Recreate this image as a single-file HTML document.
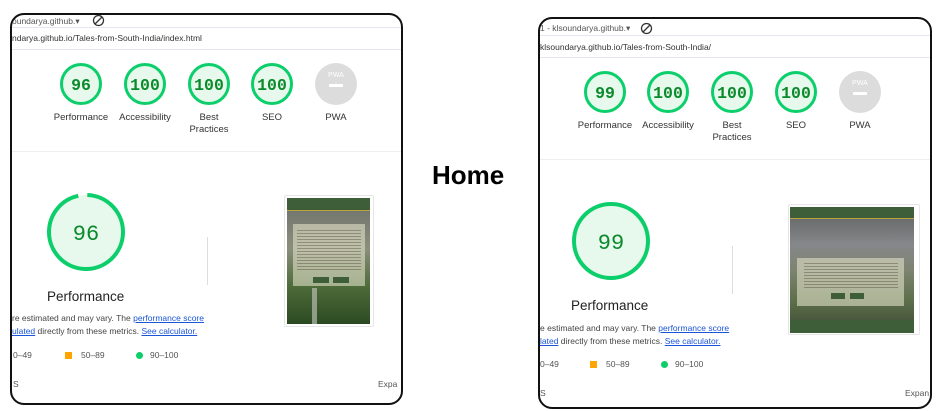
<!DOCTYPE html>
<html><head><meta charset="utf-8"><style>
*{margin:0;padding:0;box-sizing:border-box}
body{width:936px;height:411px;background:#fff;font-family:"Liberation Sans",Arial,sans-serif;position:relative;overflow:hidden;color:#212121}
.panel{position:absolute;border:2px solid #111;border-radius:14px;overflow:hidden;background:#fff}
.a{position:absolute;white-space:nowrap}
.hl{position:absolute;left:0;right:0;height:1px;background:#e4e8ee}
.lbl{position:absolute;font-size:9.5px;color:#333;text-align:center;width:70px;line-height:12px}
.g{position:absolute}
a{color:#1a55d8;text-decoration:underline}
.t{font-size:8.5px;color:#444}
</style></head><body>

<!-- LEFT PANEL -->
<div class="panel" style="left:10px;top:13px;width:393px;height:392px">
 <div class="a t" style="left:0;top:1px;color:#555">oundarya.github.▾</div>
 <svg class="a" style="left:80px;top:-1px" width="13" height="13" viewBox="0 0 13 13"><circle cx="6.5" cy="6.5" r="5" fill="none" stroke="#333" stroke-width="1.3"/><line x1="3" y1="10" x2="10" y2="3" stroke="#333" stroke-width="1.3"/></svg>
 <div class="hl" style="top:12px"></div>
 <div class="a t" style="left:0;top:18px;color:#333">ndarya.github.io/Tales-from-South-India/index.html</div>
 <div class="hl" style="top:34px"></div>

 <svg class="g" style="left:0;top:0" width="393" height="150">
  <g font-family="Liberation Mono,monospace" font-size="16.5" font-weight="bold" fill="#0a8a2a" text-anchor="middle">
   <circle cx="69" cy="69" r="19.5" fill="#e7f8ec" stroke="#0cce6b" stroke-width="3"/><text x="69" y="75">96</text>
   <circle cx="133" cy="69" r="19.5" fill="#e7f8ec" stroke="#0cce6b" stroke-width="3"/><text x="133" y="75">100</text>
   <circle cx="197" cy="69" r="19.5" fill="#e7f8ec" stroke="#0cce6b" stroke-width="3"/><text x="197" y="75">100</text>
   <circle cx="260" cy="69" r="19.5" fill="#e7f8ec" stroke="#0cce6b" stroke-width="3"/><text x="260" y="75">100</text>
  </g>
  <circle cx="324" cy="69" r="21" fill="#dcdcdc"/>
  <text x="324" y="62" font-size="7" fill="#fff" text-anchor="middle" font-family="Liberation Sans">PWA</text>
  <rect x="317" y="69" width="14" height="3" fill="#fff"/>
 </svg>
 <div class="lbl" style="left:34px;top:97px">Performance</div>
 <div class="lbl" style="left:98px;top:97px">Accessibility</div>
 <div class="lbl" style="left:162px;top:97px">Best<br>Practices</div>
 <div class="lbl" style="left:225px;top:97px">SEO</div>
 <div class="lbl" style="left:289px;top:97px">PWA</div>
 <div class="hl" style="top:136px;background:#eee"></div>

 <svg class="g" style="left:34px;top:177px" width="80" height="80">
  <circle cx="40" cy="40" r="37" fill="#e7f8ec" stroke="#0cce6b" stroke-width="4" stroke-dasharray="223 232" transform="rotate(-88 40 40)"/>
  <text x="40" y="48" font-size="22" fill="#0a8a2a" text-anchor="middle" font-family="Liberation Mono,monospace">96</text>
 </svg>
 <div class="a" style="left:35px;top:274px;font-size:13.5px;color:#222">Performance</div>
 <div class="a t" style="left:0;top:298px">re estimated and may vary. The <a>performance score</a></div>
 <div class="a t" style="left:0;top:311px"><a>ulated</a> directly from these metrics. <a>See calculator.</a></div>
 <div class="a t" style="left:1px;top:335px;color:#555">0–49</div>
 <div class="a" style="left:53px;top:337px;width:7px;height:7px;background:#ffa400"></div>
 <div class="a t" style="left:69px;top:335px;color:#555">50–89</div>
 <div class="a" style="left:124px;top:337px;width:7px;height:7px;border-radius:50%;background:#0cce6b"></div>
 <div class="a t" style="left:138px;top:335px;color:#555">90–100</div>
 <div class="a" style="left:195px;top:222px;width:1px;height:48px;background:#ddd"></div>
 <div class="a t" style="left:1px;top:364px;color:#555">S</div>
 <div class="a t" style="left:366px;top:364px;color:#555">Expa</div>

 <div class="a" style="left:272px;top:180px;width:90px;height:132px;border:1px solid #e6e6e6;border-radius:2px;background:#fff"></div>
 <div class="a" style="left:275px;top:183px;width:83px;height:126px;background:linear-gradient(#6d6f6a,#8a8f7c 40%,#4e6b3a 70%,#2c4a22);overflow:hidden">
  <div style="height:13px;background:#3e5e3a;border-bottom:1px solid #b9a33a"></div>
  <div style="position:absolute;left:6px;top:26px;width:72px;height:62px;background:rgba(225,225,200,0.6)"></div>
  <div style="position:absolute;left:10px;top:32px;width:64px;height:40px;background:repeating-linear-gradient(rgba(60,50,30,.35) 0 1px,transparent 1px 3px)"></div>
  <div style="position:absolute;left:26px;top:79px;width:16px;height:6px;background:#3e5e3a"></div>
  <div style="position:absolute;left:46px;top:79px;width:16px;height:6px;background:#3e5e3a"></div>
  <div style="position:absolute;left:25px;top:90px;width:5px;height:36px;background:#c9cdc8;opacity:.6"></div>
 </div>
</div>

<div class="a" style="left:432px;top:160px;font-size:26px;font-weight:bold;color:#000">Home</div>

<!-- RIGHT PANEL -->
<div class="panel" style="left:538px;top:17px;width:394px;height:392px">
 <div class="a t" style="left:0;top:4px;color:#555">1 - klsoundarya.github.▾</div>
 <svg class="a" style="left:100px;top:3px" width="13" height="13" viewBox="0 0 13 13"><circle cx="6.5" cy="6.5" r="5" fill="none" stroke="#333" stroke-width="1.3"/><line x1="3" y1="10" x2="10" y2="3" stroke="#333" stroke-width="1.3"/></svg>
 <div class="hl" style="top:16px"></div>
 <div class="a t" style="left:0;top:23px;color:#333">klsoundarya.github.io/Tales-from-South-India/</div>
 <div class="hl" style="top:38px"></div>

 <svg class="g" style="left:0;top:0" width="394" height="150">
  <g font-family="Liberation Mono,monospace" font-size="16.5" font-weight="bold" fill="#0a8a2a" text-anchor="middle">
   <circle cx="65" cy="73" r="19.5" fill="#e7f8ec" stroke="#0cce6b" stroke-width="3"/><text x="65" y="79">99</text>
   <circle cx="128" cy="73" r="19.5" fill="#e7f8ec" stroke="#0cce6b" stroke-width="3"/><text x="128" y="79">100</text>
   <circle cx="192" cy="73" r="19.5" fill="#e7f8ec" stroke="#0cce6b" stroke-width="3"/><text x="192" y="79">100</text>
   <circle cx="256" cy="73" r="19.5" fill="#e7f8ec" stroke="#0cce6b" stroke-width="3"/><text x="256" y="79">100</text>
  </g>
  <circle cx="320" cy="73" r="21" fill="#dcdcdc"/>
  <text x="320" y="66" font-size="7" fill="#fff" text-anchor="middle" font-family="Liberation Sans">PWA</text>
  <rect x="313" y="73" width="14" height="3" fill="#fff"/>
 </svg>
 <div class="lbl" style="left:30px;top:101px">Performance</div>
 <div class="lbl" style="left:93px;top:101px">Accessibility</div>
 <div class="lbl" style="left:157px;top:101px">Best<br>Practices</div>
 <div class="lbl" style="left:221px;top:101px">SEO</div>
 <div class="lbl" style="left:285px;top:101px">PWA</div>
 <div class="hl" style="top:140px;background:#eee"></div>

 <svg class="g" style="left:31px;top:182px" width="80" height="80">
  <circle cx="40" cy="40" r="37" fill="#e7f8ec" stroke="#0cce6b" stroke-width="4"/>
  <text x="40" y="48" font-size="22" fill="#0a8a2a" text-anchor="middle" font-family="Liberation Mono,monospace">99</text>
 </svg>
 <div class="a" style="left:31px;top:279px;font-size:13.5px;color:#222">Performance</div>
 <div class="a t" style="left:0;top:304px">e estimated and may vary. The <a>performance score</a></div>
 <div class="a t" style="left:0;top:317px"><a>lated</a> directly from these metrics. <a>See calculator.</a></div>
 <div class="a t" style="left:0;top:340px;color:#555">0–49</div>
 <div class="a" style="left:50px;top:342px;width:7px;height:7px;background:#ffa400"></div>
 <div class="a t" style="left:66px;top:340px;color:#555">50–89</div>
 <div class="a" style="left:121px;top:342px;width:7px;height:7px;border-radius:50%;background:#0cce6b"></div>
 <div class="a t" style="left:135px;top:340px;color:#555">90–100</div>
 <div class="a" style="left:192px;top:227px;width:1px;height:48px;background:#ddd"></div>
 <div class="a t" style="left:0;top:369px;color:#555">S</div>
 <div class="a t" style="left:365px;top:369px;color:#555">Expan</div>

 <div class="a" style="left:248px;top:185px;width:132px;height:131px;border:1px solid #e6e6e6;border-radius:2px;background:#fff"></div>
 <div class="a" style="left:250px;top:188px;width:124px;height:126px;background:linear-gradient(#5f605f,#86878a 30%,#7d8470 50%,#5c6e4a 75%,#3d4a33);overflow:hidden">
  <div style="height:12px;background:#3e5e3a;border-bottom:1px solid #b9a33a"></div>
  <div style="position:absolute;left:7px;top:51px;width:107px;height:48px;background:rgba(225,225,200,0.6)"></div>
  <div style="position:absolute;left:14px;top:56px;width:94px;height:26px;background:repeating-linear-gradient(rgba(60,50,30,.35) 0 1px,transparent 1px 3px)"></div>
  <div style="position:absolute;left:41px;top:86px;width:14px;height:6px;background:#3e5e3a"></div>
  <div style="position:absolute;left:60px;top:86px;width:14px;height:6px;background:#3e5e3a"></div>
  <div style="position:absolute;left:0;bottom:0;width:124px;height:13px;background:#3e5e3a"></div>
 </div>
</div>
</body></html>
